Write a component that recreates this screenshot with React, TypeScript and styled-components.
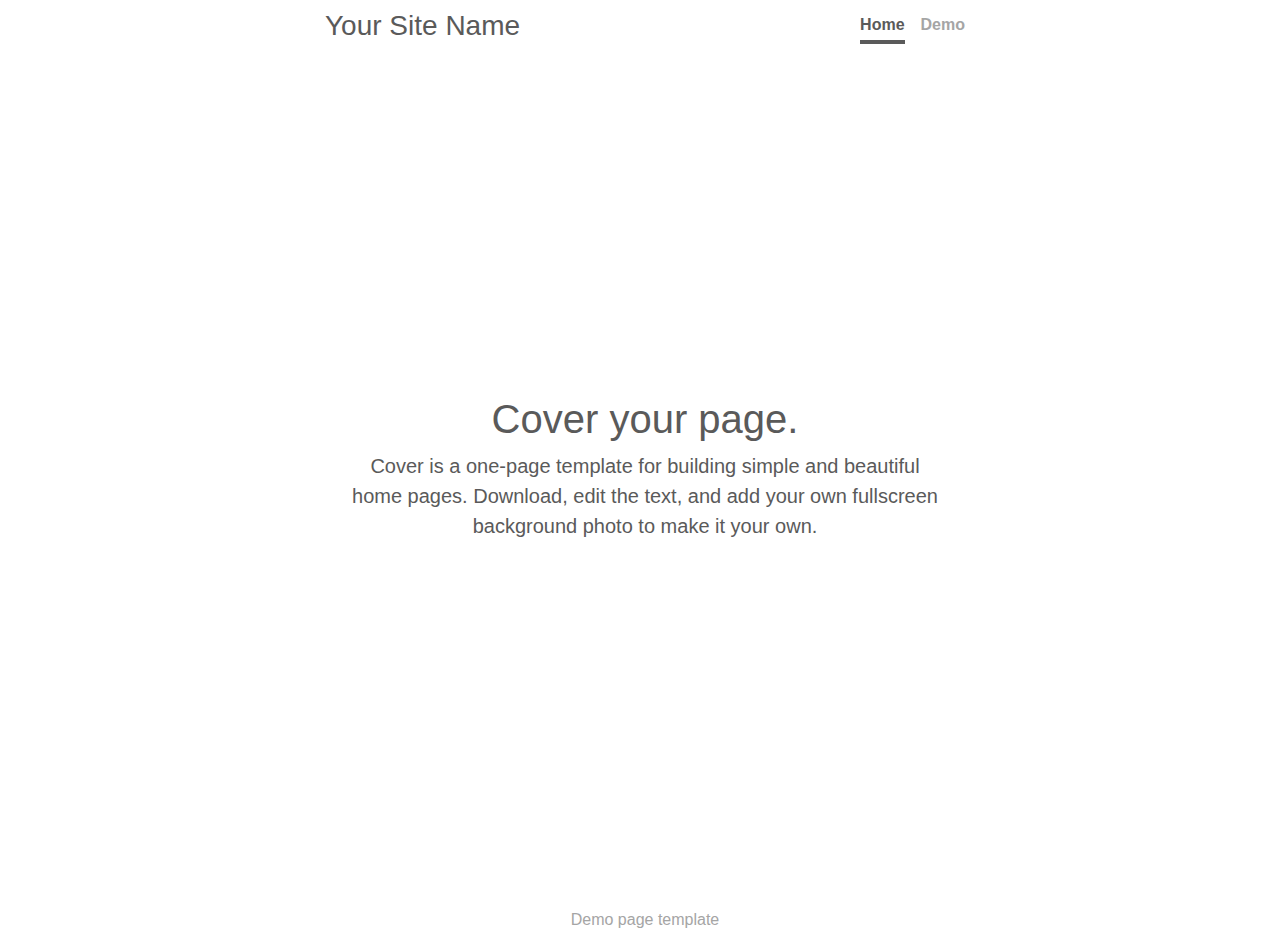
import React from "react";
import styled, { createGlobalStyle } from "styled-components";

const GlobalStyle = createGlobalStyle`
  *, *::before, *::after {
    box-sizing: border-box;
  }
  body {
    margin: 0;
    background: #fff;
    color: #5a5a5a;
    font-family: "Liberation Sans", Arial, sans-serif;
    font-size: 16px;
    line-height: 24px;
  }
`;

const Cover = styled.div`
  display: flex;
  flex-direction: column;
  align-items: center;
  min-height: 100vh;
  padding-left: 21px;
`;

const Masthead = styled.header`
  display: flex;
  justify-content: space-between;
  align-items: flex-start;
  width: 100%;
  max-width: 640px;
  padding-top: 9px;
`;

const Brand = styled.h3`
  margin: 0;
  font-size: 28px;
  font-weight: 400;
  line-height: 34px;
`;

const Nav = styled.nav`
  display: flex;
  gap: 16px;
  padding-top: 4px;
`;

const NavLink = styled.a<{ $active?: boolean }>`
  padding-bottom: 3px;
  border-bottom: 4px solid ${(p) => (p.$active ? "#5a5a5a" : "transparent")};
  color: ${(p) => (p.$active ? "#5a5a5a" : "#a5a5a5")};
  font-weight: 700;
  text-decoration: none;
`;

const Main = styled.main`
  width: 100%;
  max-width: 640px;
  margin: auto 0;
  padding: 0 24px 16px;
  text-align: center;
`;

const Heading = styled.h1`
  margin: 0 0 8px;
  font-size: 40px;
  font-weight: 400;
  line-height: 48px;
`;

const Lead = styled.p`
  margin: 0;
  font-size: 20px;
  line-height: 30px;
`;

const Footer = styled.footer`
  padding-bottom: 18px;
  color: #a5a5a5;
`;

export default function App() {
  return (
    <>
      <GlobalStyle />
      <Cover>
        <Masthead>
          <Brand>Your Site Name</Brand>
          <Nav aria-label="Main">
            <NavLink href="#" $active aria-current="page">
              Home
            </NavLink>
            <NavLink href="#demo">Demo</NavLink>
          </Nav>
        </Masthead>
        <Main>
          <Heading>Cover your page.</Heading>
          <Lead>
            Cover is a one-page template for building simple and beautiful home
            pages. Download, edit the text, and add your own fullscreen
            background photo to make it your own.
          </Lead>
        </Main>
        <Footer>Demo page template</Footer>
      </Cover>
    </>
  );
}
